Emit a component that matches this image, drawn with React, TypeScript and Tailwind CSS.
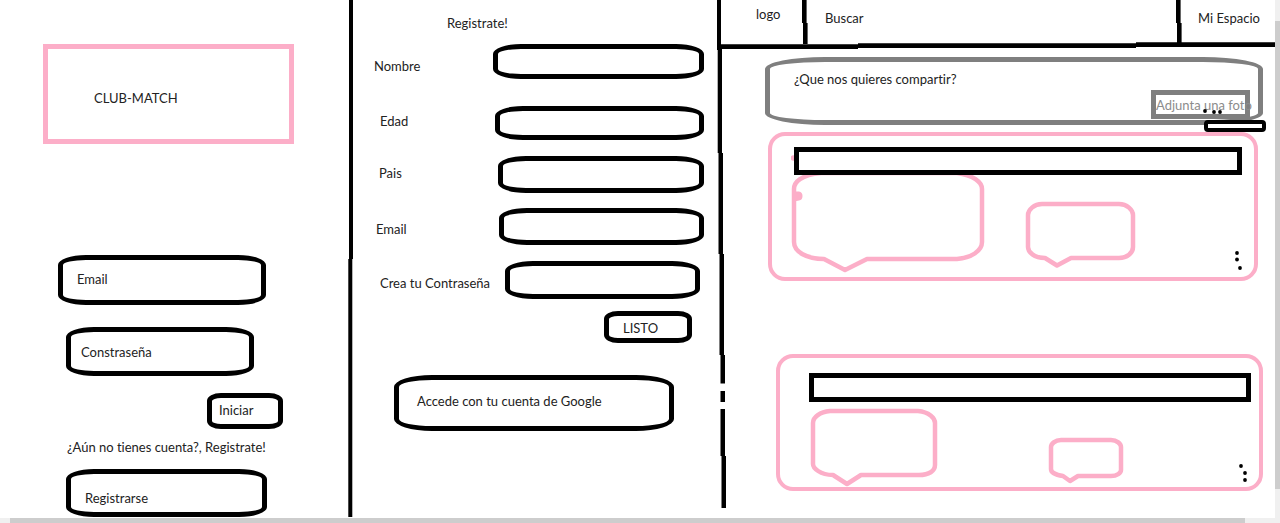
import React from "react";

const PINK = "#fcaec8";

const ovalBox = "border-[5px] border-black bg-white rounded-[28px/10px]";

type BubbleProps = { width: number; height: number; d: string; className: string; children?: React.ReactNode };

function Bubble({ width, height, d, className, children }: BubbleProps) {
  return (
    <svg width={width} height={height} viewBox={`0 0 ${width} ${height}`} className={className} aria-hidden="true">
      <path d={d} fill="none" stroke={PINK} strokeWidth="4.5" strokeLinejoin="round" />
      {children}
    </svg>
  );
}

function Dots({ points, className }: { points: [number, number][]; className: string }) {
  return (
    <svg width="20" height="20" viewBox="0 0 20 20" className={className} aria-hidden="true">
      {points.map(([x, y]) => (
        <circle key={`${x}-${y}`} cx={x} cy={y} r="1.9" fill="#000" />
      ))}
    </svg>
  );
}

function Login() {
  return (
    <section className="flex flex-col items-start pt-11">
      <h1 className="ml-[43px] flex h-[100px] w-[251px] items-center border-[5px] border-[#fcaec8] pl-[46px] pt-2">
        CLUB-MATCH
      </h1>
      <form className="mt-[111px] flex w-full flex-col items-start" onSubmit={(e) => e.preventDefault()}>
        <input
          type="email"
          aria-label="Email"
          placeholder="Email"
          className={`${ovalBox} ml-[58px] h-[50px] w-[208px] px-3.5 pb-0.5 placeholder:text-[#222]`}
        />
        <input
          type="password"
          aria-label="Constraseña"
          placeholder="Constraseña"
          className={`${ovalBox} ml-[66px] mt-[22px] h-[49px] w-[188px] px-2.5 placeholder:text-[#222]`}
        />
        <button className="ml-[207px] mt-[17px] h-9 w-[76px] rounded-[14px/8px] border-[5px] border-black pb-0.5 pl-[7px] text-left">
          Iniciar
        </button>
      </form>
      <p className="ml-[67px] mt-2">¿Aún no tienes cuenta?, Registrate!</p>
      <button className={`${ovalBox} ml-[66px] mt-3 h-[48px] w-[201px] pl-3.5 pt-2.5 text-left`}>Registrarse</button>
    </section>
  );
}

const fields = [
  { id: "nombre", label: "Nombre", type: "text", row: "mt-[11px] pl-[21px] pr-[13px]", box: "h-[35px] w-[211px]", text: "pt-2" },
  { id: "edad", label: "Edad", type: "text", row: "mt-[27px] pl-[27px] pr-[13px]", box: "h-[34px] w-[209px]", text: "pb-1" },
  { id: "pais", label: "Pais", type: "text", row: "mt-4 pl-[26px] pr-[13px]", box: "h-[37px] w-[206px]", text: "pb-1" },
  { id: "email", label: "Email", type: "email", row: "mt-[15px] pl-[23px] pr-[13px]", box: "h-[37px] w-[205px]", text: "pt-1" },
  { id: "clave", label: "Crea tu Contraseña", type: "password", row: "mt-4 pl-[27px] pr-[17px]", box: "h-[38px] w-[195px]", text: "pt-1.5" },
];

function Register() {
  return (
    <section className="flex flex-col items-start pt-[13px]">
      <h2 className="ml-[94px]">Registrate!</h2>
      <form className="w-full" onSubmit={(e) => e.preventDefault()}>
        {fields.map((f) => (
          <div key={f.id} className={`flex items-center justify-between ${f.row}`}>
            <label htmlFor={f.id} className={f.text}>
              {f.label}
            </label>
            <input id={f.id} type={f.type} className={`${ovalBox} px-3 ${f.box}`} />
          </div>
        ))}
        <div className="mt-3 flex justify-end pr-[25px]">
          <button className="h-8 w-[88px] rounded-[14px/8px] border-[5px] border-black pl-3.5 pt-0.5 text-left leading-5">
            LISTO
          </button>
        </div>
      </form>
      <button className="ml-[41px] mt-8 h-14 w-[280px] rounded-[38px/12px] border-[5px] border-black pb-1 pl-[18px] text-left">
        Accede con tu cuenta de Google
      </button>
    </section>
  );
}

function CellDivider() {
  return (
    <svg width="6" height="44" viewBox="0 0 6 44" className="shrink-0" aria-hidden="true">
      <path d="M0 0h4.6v23h1v21H1V23H0z" />
    </svg>
  );
}

function TopBar() {
  return (
    <header>
      <div className="flex h-11 items-start">
        <a href="#inicio" className="w-[76px] pl-[30px] pt-1">
          logo
        </a>
        <CellDivider />
        <input
          type="search"
          aria-label="Buscar"
          placeholder="Buscar"
          className="mt-2 h-5 min-w-0 flex-1 bg-transparent pl-[17px] outline-none placeholder:text-[#222]"
        />
        <CellDivider />
        <a href="#espacio" className="w-[93px] whitespace-nowrap pl-4 pt-2">
          Mi Espacio
        </a>
      </div>
      <svg viewBox="0 0 549 7" preserveAspectRatio="none" className="-mt-0.5 block h-[7px] w-full" aria-hidden="true">
        <path d="M0 2.3H132V1.3H410V0.300H549V5H410V6H132V7H0z" />
      </svg>
    </header>
  );
}

function Composer() {
  return (
    <div className="relative ml-[39px] mr-3 mt-2">
      <textarea
        aria-label="¿Que nos quieres compartir?"
        placeholder="¿Que nos quieres compartir?"
        className="block h-[68px] w-full resize-none rounded-[60px/12px] border-[5px] border-[#7f7f7f] pl-6 pt-[7px] leading-5 placeholder:text-[#222]"
      />
      <button className="absolute right-[13px] top-[33px] h-[29px] w-[99px] whitespace-nowrap border-[5px] border-[#7f7f7f] text-left leading-5 text-[#8c8c8c]">
        Adjunta una foto
      </button>
      <Dots points={[[3, 8], [12, 9], [18, 9]]} className="pointer-events-none absolute right-[41px] top-[46px]" />
      <button
        aria-label="Publicar"
        className="absolute -bottom-[7px] -right-[3px] h-3 w-[62px] rounded-[4px] border-4 border-black bg-white"
      />
    </div>
  );
}

function Feed() {
  return (
    <section className="flex min-w-0 flex-col">
      <TopBar />
      <Composer />
      <article className="ml-[42px] mr-[17px] mt-[7px] h-[149px] rounded-[17px] border-[4px] border-[#fcaec8] pl-[19px] pr-3 pt-[11px]">
        <div className="relative ml-[3px] h-7 border-[5px] border-black bg-white" />
        <div className="-mt-5 flex items-start">
          <Bubble
            width={195}
            height={120}
            className="shrink-0"
            d="M30 18H166C182 20 191 27 191 34V87C191 96 180 103 166 104H76L54 115L33 104C16 104 3 97 3 87V34C3 27 10 20 30 18"
          >
            <circle cx="2.500" cy="3" r="2.8" fill={PINK} />
            <path d="M3 36.500H8Q11.500 37 11.500 41T8 45.500L3 46.500z" fill={PINK} />
          </Bubble>
          <Bubble
            width={112}
            height={70}
            className="ml-[39px] mt-[46px] shrink-0"
            d="M17 3H94C102 3 108 9 108 14V46C108 52 102 57 94 57H46L32 64.500L20 57C9 57 3 51 3 46V14C3 9 9 3 17 3Z"
          />
          <button aria-label="Opciones" className="-mr-1.5 ml-auto mt-[95px] shrink-0">
            <Dots points={[[9, 3], [9, 9.5], [12, 18]]} className="block" />
          </button>
        </div>
      </article>
      <article className="ml-[50px] mr-3 mt-[73px] h-[137px] rounded-[17px] border-[4px] border-[#fcaec8] pl-[29px] pr-2 pt-[15px]">
        <div className="h-[29px] border-[5px] border-black bg-white" />
        <div className="mt-1.5 flex items-start">
          <Bubble
            width={130}
            height={80}
            className="ml-px shrink-0"
            d="M20 3H108C119 4 125 10 125 15V57C125 63 119 67 109 67H51L37 76L23 67C10 67 3 60 3 56V15C3 9 10 4 20 3Z"
          />
          <Bubble
            width={76}
            height={48}
            className="ml-[108px] mt-[29px] shrink-0"
            d="M13 3H63C69 3 73 7 73 10V33C73 36 69 39 63 39H30L22 44L15 39C7 38 3 35 3 32V10C3 7 7 3 13 3Z"
          />
          <button aria-label="Opciones" className="ml-auto mt-[54px] shrink-0">
            <Dots points={[[10, 4], [14, 11], [14, 18]]} className="block" />
          </button>
        </div>
      </article>
    </section>
  );
}

export default function App() {
  return (
    <div className="flex min-h-screen flex-col bg-white font-[Lato,'Liberation_Sans',sans-serif] text-[13px] leading-5 text-[#222] [font-variant-ligatures:none]">
      <main className="grid flex-1 grid-cols-[348px_5px_364px_9px_minmax(0,1fr)_5px]">
        <Login />
        <svg viewBox="0 0 5 518" preserveAspectRatio="none" className="h-full w-[5px]" aria-hidden="true">
          <path d="M1 0H5V259H4.3V517H0.3V259H1z" />
        </svg>
        <Register />
        <svg viewBox="0 0 9 518" preserveAspectRatio="none" className="h-full w-[9px]" aria-hidden="true">
          <path d="M0 0H4V44.3H9V49H5V153H6V254H7V355H8V383.500H3.500V355H2.500V254H1.500V153H0.700V50H0zM3.500 391H8V402H3.500zM3.500 409H8V456H9V508H4.500V456H3.500z" />
        </svg>
        <Feed />
        <div className="flex flex-col bg-[#f0f0f0] pb-[29px] pt-[21px]" aria-hidden="true">
          <div className="flex-1 bg-[#cdcdcd]" />
        </div>
      </main>
      <div className="flex h-[5px] bg-[#f0f0f0] pl-2.5 pr-[35px]" aria-hidden="true">
        <div className="flex-1 bg-[#cdcdcd]" />
      </div>
    </div>
  );
}
